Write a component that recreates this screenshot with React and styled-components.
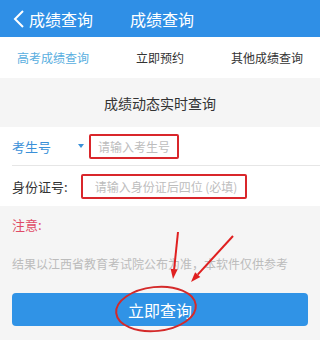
import React from "react";
import styled, { createGlobalStyle } from "styled-components";

const GlobalStyle = createGlobalStyle`
  html, body {
    margin: 0;
    padding: 0;
    background: #ffffff;
  }
  body {
    font-family: "Noto Sans CJK SC", "Noto Sans", sans-serif;
  }
`;

const Page = styled.div`
  position: relative;
  width: 320px;
  height: 340px;
  overflow: hidden;
  display: flex;
  flex-direction: column;
`;

const Header = styled.div`
  height: 37px;
  background: #2f8fe6;
  display: flex;
  align-items: center;
  padding-left: 13px;
  color: #ffffff;
  font-size: 16px;
`;

const BackButton = styled.div`
  display: flex;
  align-items: center;
  gap: 4px;
`;

const HeaderTitle = styled.span`
  margin-left: 37px;
`;

const Tabs = styled.div`
  height: 41px;
  display: flex;
  align-items: center;
  justify-content: space-between;
  padding: 0 17px 0 17px;
  background: #ffffff;
  font-size: 12px;
`;

const Tab = styled.span`
  color: ${(p) => (p.$active ? "#58aee0" : "#333333")};
`;

const Panel = styled.div`
  flex: 1;
  background: #f5f5f5;
  display: flex;
  flex-direction: column;
`;

const PanelTitle = styled.div`
  height: 49px;
  display: flex;
  align-items: center;
  justify-content: center;
  font-size: 14px;
  color: #333333;
`;

const Form = styled.div`
  background: #ffffff;
  padding-left: 12px;
`;

const Row = styled.div`
  height: ${(p) => p.$h}px;
  display: flex;
  align-items: center;
  border-bottom: ${(p) => (p.$divider ? "1px solid #e6e6e6" : "none")};
`;

const Label = styled.span`
  font-size: 13px;
  color: ${(p) => (p.$blue ? "#3a90d8" : "#333333")};
  margin-right: ${(p) => p.$gap}px;
`;

const Caret = styled.span`
  width: 0;
  height: 0;
  border-left: 3px solid transparent;
  border-right: 3px solid transparent;
  border-top: 4px solid #3a90d8;
  margin-right: 5px;
`;

const Input = styled.input`
  box-sizing: border-box;
  width: ${(p) => p.$w}px;
  height: 25px;
  border: 2px solid #d9262b;
  border-radius: 2px;
  padding: 0 0 0 ${(p) => p.$pad}px;
  font-family: inherit;
  font-size: 12px;
  color: #333333;
  background: #ffffff;
  outline: none;
  &::placeholder {
    color: #bdbdbd;
  }
`;

const Notice = styled.div`
  padding: 10px 12px 0 12px;
  display: flex;
  flex-direction: column;
`;

const NoticeTitle = styled.div`
  font-size: 13px;
  color: #e04a66;
  line-height: 18px;
`;

const NoticeText = styled.div`
  margin-top: 21px;
  font-size: 12px;
  color: #bcbcbc;
  line-height: 18px;
  white-space: nowrap;
`;

const SubmitButton = styled.button`
  margin-top: 20px;
  height: 33px;
  width: 296px;
  border: none;
  border-radius: 4px;
  background: #3093e6;
  color: #ffffff;
  font-family: inherit;
  font-size: 16px;
`;

const Annotations = styled.svg`
  position: absolute;
  left: 0;
  top: 0;
  pointer-events: none;
`;

const App = () => (
  <>
    <GlobalStyle />
    <Page>
      <Header>
        <BackButton>
          <svg width="12" height="20" viewBox="0 0 12 20">
            <path d="M10 2 L2 10 L10 18" fill="none" stroke="#fff" strokeWidth="2" />
          </svg>
          <span>成绩查询</span>
        </BackButton>
        <HeaderTitle>成绩查询</HeaderTitle>
      </Header>
      <Tabs>
        <Tab $active>高考成绩查询</Tab>
        <Tab>立即预约</Tab>
        <Tab>其他成绩查询</Tab>
      </Tabs>
      <Panel>
        <PanelTitle>成绩动态实时查询</PanelTitle>
        <Form>
          <Row $h={38} $divider>
            <Label $blue $gap={27}>考生号</Label>
            <Caret />
            <Input $w={90} $pad={7} placeholder="请输入考生号" />
          </Row>
          <Row $h={40}>
            <Label $gap={13}>身份证号:</Label>
            <Input $w={166} $pad={12} placeholder="请输入身份证后四位 (必填)" />
          </Row>
        </Form>
        <Notice>
          <NoticeTitle>注意:</NoticeTitle>
          <NoticeText>结果以江西省教育考试院公布为准，本软件仅供参考</NoticeText>
          <SubmitButton>立即查询</SubmitButton>
        </Notice>
      </Panel>
      <Annotations width="320" height="340" viewBox="0 0 320 340">
        <ellipse
          cx="156"
          cy="309"
          rx="40"
          ry="22"
          fill="none"
          stroke="#d42a2a"
          strokeWidth="2"
          transform="rotate(-6 156 309)"
        />
        <line x1="178" y1="232" x2="174.1" y2="269.5" stroke="#e02020" strokeWidth="2" />
        <polygon points="173,279 177.6,269.5 170.6,268.7" fill="#e02020" />
        <line x1="233" y1="236" x2="197.7" y2="274.6" stroke="#e02020" strokeWidth="2" />
        <polygon points="191,282 200.3,277 195.1,272.2" fill="#e02020" />
      </Annotations>
    </Page>
  </>
);

export default App;
